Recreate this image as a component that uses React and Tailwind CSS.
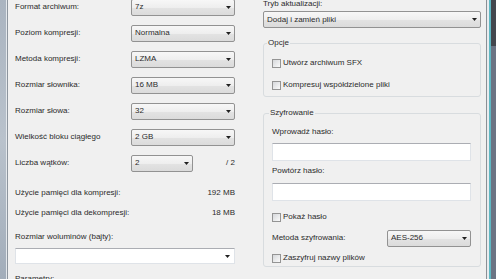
import React from 'react';

const Arrow = () => (
  <svg width="5" height="3" viewBox="0 0 5 3" className="shrink-0">
    <path d="M0 0h5L2.5 3z" fill="#202020" />
  </svg>
);

// Win7 style drop-down list (read only)
const Combo = ({ value, className = '' }) => (
  <div
    className={`flex h-[17px] items-center rounded-[2px] border border-[#929292] bg-[linear-gradient(#f7f7f7,#eeeeee_50%,#e3e3e3_51%,#dbdbdb)] pl-[3px] pr-[3px] ${className}`}
  >
    <span className="flex-1 truncate">{value}</span>
    <Arrow />
  </div>
);

const Check = ({ label, className = '' }) => (
  <div className={`flex h-[10px] items-center gap-[2px] ${className}`}>
    <span className="h-[9px] w-[9px] shrink-0 border border-[#949494] bg-gradient-to-br from-[#d6d8db] to-[#fafafa]" />
    <span>{label}</span>
  </div>
);

const Edit = ({ className = '' }) => (
  <div className={`h-[18px] border border-[#dfe3e8] border-t-[#abadb3] bg-white ${className}`} />
);

const Row = ({ label, children }) => (
  <div className="flex h-[26px] items-center">
    <span className="w-[116px] shrink-0">{label}</span>
    {children}
  </div>
);

const App = () => {
  return (
    <div
      className="flex h-[279px] w-[496px] overflow-hidden text-[8px] leading-[10px] text-[#2b2b2b]"
      style={{ fontFamily: '"Liberation Sans", Arial, sans-serif' }}
    >
      {/* left window frame */}
      <div className="w-[6px] bg-gradient-to-b from-[#aab4c0] via-[#b9c2cc] to-[#a2adba]" />
      <div className="w-px bg-[#e4e8ec]" />
      <div className="w-px bg-[#8d959e]" />

      <div className="flex flex-1 items-start bg-[#f0f0f0] pl-[7px]">
        {/* left column */}
        <div className="-mt-[6px] w-[220px] shrink-0">
          <Row label="Format archiwum:">
            <Combo value="7z" className="flex-1" />
          </Row>
          <Row label="Poziom kompresji:">
            <Combo value="Normalna" className="flex-1" />
          </Row>
          <Row label="Metoda kompresji:">
            <Combo value="LZMA" className="flex-1" />
          </Row>
          <Row label="Rozmiar słownika:">
            <Combo value="16 MB" className="flex-1" />
          </Row>
          <Row label="Rozmiar słowa:">
            <Combo value="32" className="flex-1" />
          </Row>
          <Row label="Wielkość bloku ciągłego">
            <Combo value="2 GB" className="flex-1" />
          </Row>
          <Row label="Liczba wątków:">
            <Combo value="2" className="w-[62px]" />
            <span className="flex-1 text-right">/ 2</span>
          </Row>

          <div className="mt-[12px] flex h-[10px] justify-between">
            <span>Użycie pamięci dla kompresji:</span>
            <span>192 MB</span>
          </div>
          <div className="mt-[10px] flex h-[10px] justify-between">
            <span>Użycie pamięci dla dekompresji:</span>
            <span>18 MB</span>
          </div>

          <div className="mt-[14px] h-[10px]">Rozmiar woluminów (bajty):</div>
          <div className="mt-[6px] flex h-[16px] items-center justify-end border border-[#dfe3e8] border-t-[#abadb3] bg-white pr-[4px]">
            <Arrow />
          </div>
          <div className="mt-[10px] h-[10px]">Parametry:</div>
        </div>

        {/* right column */}
        <div className="-mt-px ml-[28px] w-[218px] shrink-0">
          <div className="h-[10px]">Tryb aktualizacji:</div>
          <Combo value="Dodaj i zamień pliki" className="mt-[2px]" />

          <fieldset className="mt-[10px] rounded-[3px] border border-[#d8dcdf] pb-[6px] pl-[8px] pr-[9px]">
            <legend className="-ml-[5px] px-px leading-[10px]">Opcje</legend>
            <Check label="Utwórz archiwum SFX" className="mt-[10px]" />
            <Check label="Kompresuj współdzielone pliki" className="mt-[12px]" />
          </fieldset>

          <fieldset className="mt-[11px] rounded-[3px] border border-[#d8dcdf] pb-[3px] pl-[8px] pr-[9px]">
            <legend className="-ml-[3px] px-px leading-[10px]">Szyfrowanie</legend>
            <div className="mt-[9px] h-[10px]">Wprowadź hasło:</div>
            <Edit className="mt-[6px]" />
            <div className="mt-[5px] h-[10px]">Powtórz hasło:</div>
            <Edit className="mt-[7px]" />
            <Check label="Pokaż hasło" className="mt-[11px]" />
            <div className="mt-[8px] flex h-[16px] items-center">
              <span className="w-[115px] shrink-0">Metoda szyfrowania:</span>
              <Combo value="AES-256" className="h-[16px] flex-1" />
            </div>
            <Check label="Zaszyfruj nazwy plików" className="mt-[7px]" />
          </fieldset>
        </div>
      </div>

      {/* right window frame */}
      <div className="w-px bg-[#8a9096]" />
      <div className="w-[2px] bg-[#e8ecef]" />
      <div className="w-[2px] bg-[#5fb8c3]" />
      <div className="flex w-[5px] flex-col">
        <div className="h-[46px] bg-[#43474e]" />
        <div className="flex-1 bg-[#6b7484]" />
      </div>
    </div>
  );
};

export default App;
